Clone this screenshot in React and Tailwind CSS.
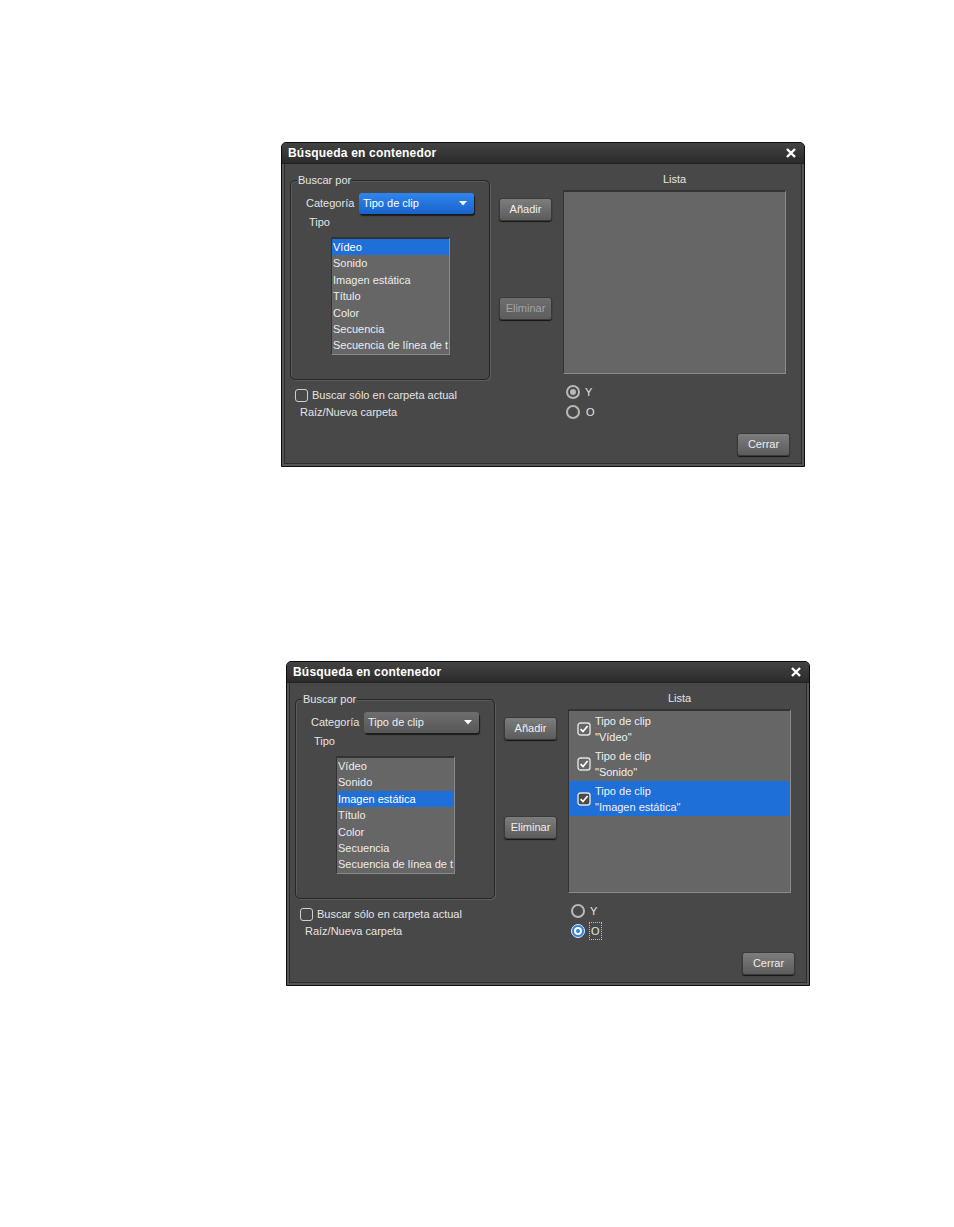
const TIPOS = [
  "Vídeo",
  "Sonido",
  "Imagen estática",
  "Título",
  "Color",
  "Secuencia",
  "Secuencia de línea de t",
];

const Button = ({ children, disabled }) => (
  <div
    className={`w-[53px] h-[23px] rounded-[3px] flex items-center justify-center border border-[#3a3a3a] shadow-[0_1px_1px_#151515] bg-gradient-to-b ${
      disabled
        ? "from-[#6e6e6e] to-[#5e5e5e] text-[#a3a3a3]"
        : "from-[#7d7d7d] to-[#5c5c5c] text-[#eeeeee]"
    }`}
  >
    {children}
  </div>
);

const Check = ({ dark }) => (
  <svg width="14" height="14" viewBox="0 0 14 14" className="shrink-0">
    <rect
      x="1"
      y="1"
      width="12"
      height="12"
      rx="2.5"
      fill={dark ? "#4a4a4a" : "none"}
      stroke="#e2e2e2"
      strokeWidth="1.4"
    />
    <path d="M3.6 7.2 L6 9.6 L10.6 4" fill="none" stroke="#ffffff" strokeWidth="1.7" />
  </svg>
);

const Radio = ({ state }) => {
  if (state === "blue")
    return (
      <div className="w-[14px] h-[14px] rounded-full bg-[#2f7fe4] border border-[#dfe9f7] flex items-center justify-center">
        <div className="w-[8px] h-[8px] rounded-full bg-white flex items-center justify-center">
          <div className="w-[4px] h-[4px] rounded-full bg-[#2f7fe4]" />
        </div>
      </div>
    );
  return (
    <div className="w-[14px] h-[14px] rounded-full border-2 border-[#b8b8b8] flex items-center justify-center">
      {state === "gray" && <div className="w-[6px] h-[6px] rounded-full bg-[#b8b8b8]" />}
    </div>
  );
};

const ListaItem = ({ valor, selected }) => (
  <div
    className={`h-[35px] flex items-center pl-[8px] ${selected ? "bg-[#1f6fd8]" : ""}`}
  >
    <Check dark={selected} />
    <div className="ml-[4px] leading-[16px] text-[#f0f0f0]">
      <div>Tipo de clip</div>
      <div>"{valor}"</div>
    </div>
  </div>
);

const Dialog = ({ second }) => (
  <div className="w-[524px] h-[325px] border border-[#0c0c0c] bg-[#555555] rounded-t-[5px] flex flex-col overflow-hidden">
    {/* barra de título */}
    <div className="h-[21px] shrink-0 bg-gradient-to-b from-[#434343] to-[#2b2b2b] border-b border-[#222] flex items-center justify-between pl-[6px] pr-[8px]">
      <span className="text-white font-bold text-[12px] tracking-[0.2px]">
        Búsqueda en contenedor
      </span>
      <svg width="10" height="10" viewBox="0 0 10 10">
        <path d="M1 1 L9 9 M9 1 L1 9" stroke="#ffffff" strokeWidth="2.4" />
      </svg>
    </div>

    <div className="flex-1 mx-[2px] mb-[2px] border border-t-0 border-[#2c2c2c] bg-[#484848] flex flex-col text-[11px] text-[#e4e4e4]">
      <div className="flex pl-[5px]">
        {/* columna izquierda */}
        <div className="w-[200px]">
          <div className="relative mt-[16px] h-[200px] rounded-[5px] border border-[#262626] shadow-[1px_1px_0_#5c5c5c,inset_1px_1px_0_#5a5a5a]">
            <span className="absolute -top-[8px] left-[6px] px-[1px] bg-[#484848] leading-[14px]">
              Buscar por
            </span>
            <div className="flex items-center mt-[12px] pl-[15px]">
              <span className="w-[53px]">Categoría</span>
              <div
                className={`w-[115px] h-[21px] rounded-[3px] flex items-center justify-between pl-[4px] pr-[7px] ${
                  second
                    ? "bg-gradient-to-b from-[#6e6e6e] to-[#575757] text-[#eeeeee] shadow-[1px_2px_1px_#1c1c1c]"
                    : "bg-gradient-to-b from-[#2f86ee] to-[#1a62cb] text-white shadow-[1px_2px_1px_#1c1c1c]"
                }`}
              >
                <span>Tipo de clip</span>
                <svg width="8" height="5" viewBox="0 0 8 5">
                  <path d="M0 0 H8 L4 4.5 Z" fill="#ffffff" />
                </svg>
              </div>
            </div>
            <div className="pl-[18px] mt-[0px] leading-[16px]">Tipo</div>
            <div className="ml-[40px] mt-[7px] w-[119px] h-[118px] bg-[#666666] border-t-2 border-l border-[#333333] border-r border-b border-r-[#8a8a8a] border-b-[#8a8a8a]">
              {TIPOS.map((t, i) => (
                <div
                  key={t}
                  className={`h-[16.4px] leading-[16.4px] pl-[1px] whitespace-nowrap overflow-hidden ${
                    (second ? i === 2 : i === 0) ? "bg-[#1f6fd8] text-white" : "text-[#ececec]"
                  }`}
                >
                  {t}
                </div>
              ))}
            </div>
          </div>
          <div className="flex items-center h-[16px] mt-[7px] pl-[5px]">
            <div className="w-[13px] h-[13px] rounded-[3px] border-[1.5px] border-[#cfcfcf]" />
            <span className="ml-[4px]">Buscar sólo en carpeta actual</span>
          </div>
          <div className="h-[16px] mt-[1px] pl-[10px] leading-[16px]">Raíz/Nueva carpeta</div>
        </div>

        {/* columna central */}
        <div className="ml-[9px] w-[53px]">
          <div className="mt-[34px]">
            <Button>Añadir</Button>
          </div>
          <div className="mt-[76px]">
            <Button disabled={!second}>Eliminar</Button>
          </div>
        </div>

        {/* columna derecha */}
        <div className="ml-[11px] w-[223px]">
          <div className="mt-[8px] h-[14px] leading-[14px] text-center">Lista</div>
          <div className="mt-[4px] h-[184px] bg-[#666666] border-t-2 border-l border-[#333333] border-r border-b border-r-[#8a8a8a] border-b-[#8a8a8a]">
            {second && (
              <>
                <ListaItem valor="Vídeo" />
                <ListaItem valor="Sonido" />
                <ListaItem valor="Imagen estática" selected />
              </>
            )}
          </div>
          <div className="flex items-center h-[16px] mt-[10px] pl-[3px]">
            <Radio state={second ? "off" : "gray"} />
            <span className="ml-[5px]">Y</span>
          </div>
          <div className="flex items-center h-[16px] mt-[4px] pl-[3px]">
            <Radio state={second ? "blue" : "off"} />
            <span
              className={`ml-[5px] px-[1px] ${second ? "outline outline-1 outline-dotted outline-[#bbbbbb]" : ""}`}
            >
              O
            </span>
          </div>
        </div>
      </div>

      <div className="mt-auto flex justify-end pr-[11px] pb-[7px]">
        <Button>Cerrar</Button>
      </div>
    </div>
  </div>
);

export default function App() {
  return (
    <div className="w-[954px] h-[1227px] bg-white pt-[142px] font-['Liberation_Sans',Arial,sans-serif]">
      <div className="ml-[281px]">
        <Dialog />
      </div>
      <div className="ml-[286px] mt-[194px]">
        <Dialog second />
      </div>
    </div>
  );
}
